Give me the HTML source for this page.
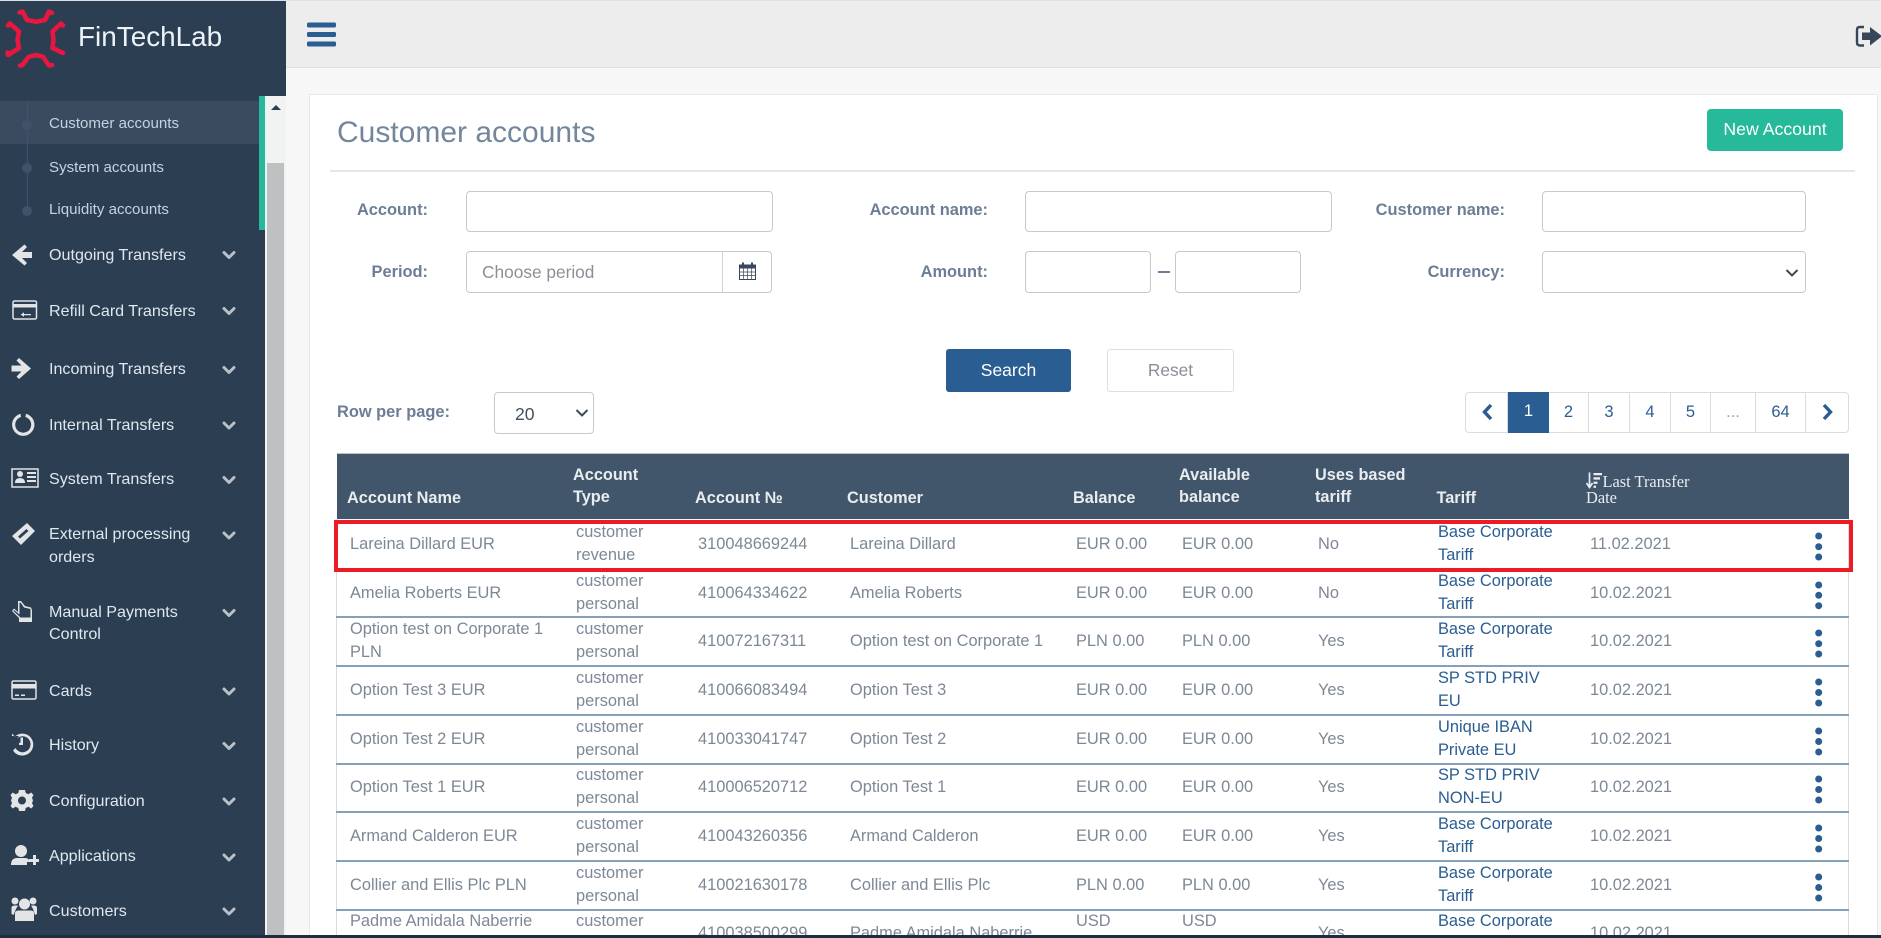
<!DOCTYPE html>
<html lang="en"><head><meta charset="utf-8"><title>Customer accounts</title>
<style>
*{box-sizing:border-box}
html,body{margin:0;padding:0;width:1881px;height:938px;overflow:hidden;background:#f7f7f7;font-family:"Liberation Sans",sans-serif}
.a{position:absolute}
#page{position:relative;width:1881px;height:938px;overflow:hidden}
.s{position:absolute;left:49px;font-size:15.1px;line-height:20px;color:#c6d2df;white-space:nowrap}
.m{position:absolute;left:49px;font-size:16.1px;line-height:22.7px;color:#dfe8f0;white-space:nowrap}
.lb{position:absolute;font-weight:bold;font-size:16.4px;line-height:20px;color:#6c7d95;text-align:right;white-space:nowrap}
.in{position:absolute;background:#fff;border:1px solid #c9c9cc;border-radius:4px}
.hd{position:absolute;font-weight:bold;font-size:16.3px;line-height:22.7px;color:#e9edf0;white-space:nowrap}
.r{position:absolute;left:0;width:0;height:0}
.r div{position:absolute;font-size:16.4px;line-height:23px;color:#7d8896;white-space:nowrap;top:-11.2px}
.r .d{top:-22.9px}
.r .t{color:#2a5d92}
.sep{position:absolute;left:336px;width:1513px;height:2px;background:#86a0b8}
.pg{position:absolute;top:392px;height:41px;border:1px solid #d9dde1;border-left:none;font-size:16.5px;line-height:39px;text-align:center;color:#2a5d92;background:#fff}
</style></head><body><div id="page">

<div class="a" style="left:0;top:0;width:1881px;height:1px;background:#dde2e8"></div>
<div class="a" style="left:286px;top:1px;width:1595px;height:67px;background:#ededed;border-bottom:1px solid #dcdfe4"></div>
<div class="a" style="left:0;top:1px;width:286px;height:95px;background:#2b3e52"></div>
<div class="a" style="left:0;top:96px;width:265px;height:842px;background:#2b3e52"></div>

<svg class="a" style="left:0;top:0" width="72" height="72" fill="none" stroke="#e8173f" stroke-width="4.6" stroke-linecap="round" stroke-linejoin="round">
<path d="M19.5 12.5L22.5 11.5L27 20L36 21.8L45 20L49 11.5L52 13"/>
<path d="M8 25.5L10 23.5L19 31.5L17.5 40L19 48L8 55L7.5 52.5"/>
<path d="M63 25.5L61 23.5L52.5 31.5L53.5 40L52.5 48L63 53"/>
<path d="M20 65.5L22.5 65L28.5 56.8L36 55L43 56.8L49 65.5L52 65"/>
</svg>
<div class="a" style="left:78px;top:20px;font-size:27.9px;line-height:34px;color:#eef3f8;white-space:nowrap">FinTechLab</div>

<!-- hamburger -->
<svg class="a" style="left:307px;top:22px" width="30" height="25" fill="#2a5d92"><rect y="0.5" width="29" height="5" rx="1.5"/><rect y="10" width="29" height="5" rx="1.5"/><rect y="19.5" width="29" height="5" rx="1.5"/></svg>
<!-- logout -->
<svg class="a" style="left:1855px;top:25px" width="26" height="23"><path d="M9 2H5Q2 2 2 5V17.500Q2 20.500 5 20.500H9" fill="none" stroke="#36475a" stroke-width="2.400"/><path d="M7 7.500H15V2L27 11.200L15 20.500V15H7Z" fill="#36475a"/></svg>

<!-- sidebar sub -->
<div class="a" style="left:0;top:101px;width:259px;height:43px;background:#3a4b60"></div>
<div class="a" style="left:27px;top:101px;width:1px;height:110px;background:#3f5268"></div>
<div class="a" style="left:22px;top:120px;width:10px;height:10px;border-radius:50%;background:#3f5268"></div>
<div class="a" style="left:22px;top:163px;width:10px;height:10px;border-radius:50%;background:#3f5268"></div>
<div class="a" style="left:22px;top:206px;width:10px;height:10px;border-radius:50%;background:#3f5268"></div>
<div class="s" style="top:114px">Customer accounts</div>
<div class="s" style="top:158px">System accounts</div>
<div class="s" style="top:200px">Liquidity accounts</div>
<div class="a" style="left:259px;top:96px;width:6px;height:134px;background:#26b99a"></div>

<!-- scrollbar -->
<div class="a" style="left:265px;top:96px;width:21px;height:839px;background:#f1f2f2"></div>
<div class="a" style="left:267px;top:163px;width:17px;height:772px;background:#bfc0c1"></div>
<div class="a" style="left:271px;top:105px;width:0;height:0;border-left:5px solid transparent;border-right:5px solid transparent;border-bottom:5px solid #2b3e52"></div>

<!-- main menu text -->
<div class="m" style="top:244px">Outgoing Transfers</div>
<div class="m" style="top:300px">Refill Card Transfers</div>
<div class="m" style="top:357.500px">Incoming Transfers</div>
<div class="m" style="top:413.500px">Internal Transfers</div>
<div class="m" style="top:467.500px">System Transfers</div>
<div class="m" style="top:523.300px;width:170px;white-space:normal;line-height:23px">External processing orders</div>
<div class="m" style="top:600.500px;width:170px;white-space:normal">Manual Payments Control</div>
<div class="m" style="top:679.500px">Cards</div>
<div class="m" style="top:733.500px">History</div>
<div class="m" style="top:789.500px">Configuration</div>
<div class="m" style="top:844.500px">Applications</div>
<div class="m" style="top:899.500px">Customers</div>

<!-- chevrons + icons -->
<svg class="a" style="left:0;top:0" width="265" height="938">
<g fill="none" stroke="#b9c0c7" stroke-width="3" stroke-linecap="round" stroke-linejoin="round">
<path d="M224 252.500L229 257.500L234 252.500"/><path d="M224 308.500L229 313.500L234 308.500"/><path d="M224 367.500L229 372.500L234 367.500"/><path d="M224 423L229 428L234 423"/><path d="M224 477.500L229 482.500L234 477.500"/><path d="M224 533L229 538L234 533"/><path d="M224 610.500L229 615.500L234 610.500"/><path d="M224 689L229 694L234 689"/><path d="M224 743.500L229 748.500L234 743.500"/><path d="M224 799L229 804L234 799"/><path d="M224 855L229 860L234 855"/><path d="M224 909L229 914L234 909"/>
</g>
<g fill="#e3e4e6">
<path d="M24.500 244.500L27 247L22 252H32V258H22L27 263L24.500 265.500L12 255Z"/>
<rect x="13" y="301" width="23.500" height="18" rx="1.500" fill="none" stroke="#e3e4e6" stroke-width="1.500"/><rect x="13" y="304" width="23.500" height="3.500"/>
<path d="M21 314H31V315.200H21ZM21 314.600L24 312.300V316.900Z"/>
<path d="M19 358L16.500 360.500L21.500 365.500H11.500V371.500H21.500L16.500 376.500L19 379L31 368.500Z"/>
<path d="M20.500 413.800A11.200 11.200 0 1 0 26 413.800L25.400 417A8 8 0 1 1 21 417Z"/>
<rect x="12" y="469" width="26" height="18" fill="none" stroke="#e3e4e6" stroke-width="1.500"/><circle cx="20" cy="474" r="3"/><path d="M15 483Q15 478 20 478Q25 478 25 483ZM27 472H36V474H27ZM27 476H36V478H27ZM27 480H36V482H27Z"/>
<path d="M12 536L27 523L35 531L21 545ZM20 538.500L28.500 531L26.500 529L18 536.500Z" fill-rule="evenodd"/>
<path fill-rule="evenodd" d="M18 601L21 601L25 606L31 607.500L32 610V622H19V618L12 611L14 608.500L18 612ZM20.500 602.500L19.500 603V614.500L14 610L13.500 611L20.500 617.500H30.500V609L24 607.500Z"/>
<rect x="12" y="681" width="24" height="18" rx="1.500" fill="none" stroke="#e3e4e6" stroke-width="1.500"/><rect x="12" y="684" width="24" height="4.500"/><rect x="15" y="694.500" width="4" height="1.500"/><rect x="21" y="694.500" width="4" height="1.500"/>
<path d="M12 736L19 736L17 738.500A8 8 0 1 1 15.500 748L13 750.500A11 11 0 1 0 14.800 736.500L12 733.500Z"/><path d="M20.500 737.500H23V745H19V742.800H20.500Z"/>
<path fill-rule="evenodd" d="M19 790H25L25.700 793L28.500 794.200L31.200 792.500L33.500 795L32 797.800L33 800.500L32 803.200L33.500 806L31.200 808.500L28.500 806.800L25.700 808L25 811H19L18.300 808L15.500 806.800L12.800 808.500L10.500 806L12 803.200L11 800.500L12 797.800L10.500 795L12.800 792.500L15.500 794.200L18.300 793ZM22 796.500A4 4 0 1 0 22 804.500A4 4 0 1 0 22 796.500Z"/>
<circle cx="21" cy="851" r="6"/><path d="M11 865Q11 858 17 858H25Q28 858 29 860V862H27V865Z"/><rect x="33" y="855" width="3" height="10"/><rect x="29" y="859" width="10" height="3"/>
<circle cx="24.500" cy="904" r="5.500"/><circle cx="15" cy="901" r="3.500"/><circle cx="33" cy="901" r="3.500"/><path d="M15 921V913Q15 910.500 19 910.500H30Q34 910.500 34 913V921Z"/><path d="M11.500 914V908Q11.500 905.500 15 905.500H18L16 909L13.500 915ZM37 914V908Q37 905.500 33.500 905.500H31L33 909L35 915Z"/>
</g>
</svg>

<!-- card -->
<div class="a" style="left:309px;top:94px;width:1569px;height:850px;background:#fff;border:1px solid #e6e9ed"></div>
<div class="a" style="left:337px;top:115px;font-size:30px;line-height:36px;color:#73869c;white-space:nowrap">Customer accounts</div>
<div class="a" style="left:330px;top:170px;width:1525px;height:2px;background:#e7e7eb"></div>
<div class="a" style="left:1707px;top:109px;width:136px;height:42px;background:#26b99a;border-radius:4px;color:#fff;font-size:17.700px;line-height:41px;text-align:center">New Account</div>

<!-- filters -->
<div class="lb" style="left:300px;width:128px;top:200px">Account:</div>
<div class="in" style="left:466px;top:191px;width:307px;height:41px"></div>
<div class="lb" style="left:840px;width:148px;top:200px">Account name:</div>
<div class="in" style="left:1025px;top:191px;width:307px;height:41px"></div>
<div class="lb" style="left:1340px;width:165px;top:200px">Customer name:</div>
<div class="in" style="left:1542px;top:191px;width:264px;height:41px"></div>

<div class="lb" style="left:300px;width:128px;top:262px">Period:</div>
<div class="in" style="left:466px;top:251px;width:306px;height:42px"></div>
<div class="a" style="left:722px;top:252px;width:1px;height:40px;background:#d5d5d8"></div>
<div class="a" style="left:482px;top:261px;font-size:17.300px;line-height:22px;color:#8b9097;white-space:nowrap">Choose period</div>
<svg class="a" style="left:739px;top:262px" width="17" height="18" fill="none" stroke="#37485a"><rect x="0.500" y="3" width="16" height="14.500"/><rect x="0" y="2.500" width="17" height="4" fill="#37485a" stroke="none"/><path d="M4 0.500V4M13 0.500V4" stroke-width="2"/><path d="M0 10H17M0 13.500H17M4.500 6V17M8.500 6V17M12.500 6V17" stroke-width="0.700"/></svg>

<div class="lb" style="left:840px;width:148px;top:262px">Amount:</div>
<div class="in" style="left:1025px;top:251px;width:126px;height:42px"></div>
<div class="a" style="left:1158px;top:271px;width:12px;height:1.500px;background:#6c7d95"></div>
<div class="in" style="left:1175px;top:251px;width:126px;height:42px"></div>
<div class="lb" style="left:1340px;width:165px;top:262px">Currency:</div>
<div class="in" style="left:1542px;top:251px;width:264px;height:42px"></div>
<svg class="a" style="left:1785px;top:268px" width="14" height="10" fill="none" stroke="#3c4a5e" stroke-width="2"><path d="M1.500 2L7 7.500L12.500 2"/></svg>

<div class="a" style="left:946px;top:349px;width:125px;height:43px;background:#2a5d92;border-radius:3px;color:#fff;font-size:17.500px;line-height:42px;text-align:center">Search</div>
<div class="a" style="left:1107px;top:349px;width:127px;height:43px;background:#fff;border:1px solid #dcdfe3;border-radius:3px;color:#8a8f97;font-size:17.300px;line-height:41px;text-align:center">Reset</div>

<div class="lb" style="left:337px;top:401.500px;text-align:left">Row per page:</div>
<div class="in" style="left:494px;top:392px;width:100px;height:42px"></div>
<div class="a" style="left:515px;top:402.500px;font-size:17.600px;line-height:22px;color:#44505f">20</div>
<svg class="a" style="left:575px;top:408px" width="14" height="10" fill="none" stroke="#3c4a5e" stroke-width="2"><path d="M1.500 2L7 7.500L12.500 2"/></svg>

<!-- pagination -->
<div class="pg" style="left:1465px;width:43px;border-left:1px solid #d9dde1;border-radius:4px 0 0 4px"></div>
<svg class="a" style="left:1481px;top:403px" width="14" height="18" fill="none" stroke="#2a5d92" stroke-width="3.400"><path d="M10 2L3.500 9L10 16"/></svg>
<div class="pg" style="left:1508px;width:41px;background:#2a5d92;color:#fff;border:none">1</div>
<div class="pg" style="left:1549px;width:40px">2</div>
<div class="pg" style="left:1589px;width:41px">3</div>
<div class="pg" style="left:1630px;width:41px">4</div>
<div class="pg" style="left:1671px;width:40px">5</div>
<div class="pg" style="left:1711px;width:45px;color:#9aa2aa">...</div>
<div class="pg" style="left:1756px;width:50px">64</div>
<div class="pg" style="left:1806px;width:43px;border-radius:0 4px 4px 0"></div>
<svg class="a" style="left:1819.500px;top:403px" width="14" height="18" fill="none" stroke="#2a5d92" stroke-width="3.400"><path d="M4 2L10.500 9L4 16"/></svg>

<!-- table head -->
<div class="a" style="left:336.500px;top:453px;width:1512px;height:66px;background:#41566b;border-top:1px solid #b9c2cb"></div>
<div class="hd" style="left:347px;top:486.500px">Account Name</div>
<div class="hd" style="left:573px;top:463.500px">Account<br>Type</div>
<div class="hd" style="left:695px;top:486.500px">Account №</div>
<div class="hd" style="left:847px;top:486.500px">Customer</div>
<div class="hd" style="left:1073px;top:486.500px">Balance</div>
<div class="hd" style="left:1179px;top:463.500px">Available<br>balance</div>
<div class="hd" style="left:1315px;top:463.500px">Uses based<br>tariff</div>
<div class="hd" style="left:1436.500px;top:486.500px">Tariff</div>
<svg class="a" style="left:1586px;top:472px" width="17" height="18"><path d="M3.500 0.500V15M0.500 11L3.500 15.500L6.500 11" fill="none" stroke="#e9edf0" stroke-width="1.700"/><path d="M7.500 1H16V3.300H7.500ZM7.500 5.300H14V7.600H7.500ZM7.500 9.600H11.500V11.900H7.500ZM7.500 13.600H10V15.900H7.500Z" fill="#e9edf0"/></svg>
<div class="a" style="left:1586px;top:473.500px;width:130px;font-family:'Liberation Serif',serif;font-size:16.400px;line-height:16px;color:#e9edf0;text-indent:16.500px">Last Transfer Date</div>

<!-- rows -->
<div class="a" style="left:336px;top:519px;width:1px;height:416px;background:#d9dde1"></div>
<div class="a" style="left:1848px;top:519px;width:1px;height:416px;background:#d9dde1"></div>
<div class="sep" style="top:568px;background:#c5cfd9"></div>
<div class="sep" style="top:616px"></div>
<div class="sep" style="top:665px"></div>
<div class="sep" style="top:713.500px"></div>
<div class="sep" style="top:762.500px"></div>
<div class="sep" style="top:811px"></div>
<div class="sep" style="top:860px"></div>
<div class="sep" style="top:908.500px"></div>

<div class="r" style="top:544px"><div style="left:350px">Lareina Dillard EUR</div><div class="d" style="left:576px">customer<br>revenue</div><div style="left:698px">310048669244</div><div style="left:850px">Lareina Dillard</div><div style="left:1076px">EUR 0.00</div><div style="left:1182px">EUR 0.00</div><div style="left:1318px">No</div><div class="d t" style="left:1438px">Base Corporate<br>Tariff</div><div style="left:1590px">11.02.2021</div></div>
<div class="r" style="top:593px"><div style="left:350px">Amelia Roberts EUR</div><div class="d" style="left:576px">customer<br>personal</div><div style="left:698px">410064334622</div><div style="left:850px">Amelia Roberts</div><div style="left:1076px">EUR 0.00</div><div style="left:1182px">EUR 0.00</div><div style="left:1318px">No</div><div class="d t" style="left:1438px">Base Corporate<br>Tariff</div><div style="left:1590px">10.02.2021</div></div>
<div class="r" style="top:641px"><div class="d" style="left:350px">Option test on Corporate 1<br>PLN</div><div class="d" style="left:576px">customer<br>personal</div><div style="left:698px">410072167311</div><div style="left:850px">Option test on Corporate 1</div><div style="left:1076px">PLN 0.00</div><div style="left:1182px">PLN 0.00</div><div style="left:1318px">Yes</div><div class="d t" style="left:1438px">Base Corporate<br>Tariff</div><div style="left:1590px">10.02.2021</div></div>
<div class="r" style="top:690px"><div style="left:350px">Option Test 3 EUR</div><div class="d" style="left:576px">customer<br>personal</div><div style="left:698px">410066083494</div><div style="left:850px">Option Test 3</div><div style="left:1076px">EUR 0.00</div><div style="left:1182px">EUR 0.00</div><div style="left:1318px">Yes</div><div class="d t" style="left:1438px">SP STD PRIV<br>EU</div><div style="left:1590px">10.02.2021</div></div>
<div class="r" style="top:739px"><div style="left:350px">Option Test 2 EUR</div><div class="d" style="left:576px">customer<br>personal</div><div style="left:698px">410033041747</div><div style="left:850px">Option Test 2</div><div style="left:1076px">EUR 0.00</div><div style="left:1182px">EUR 0.00</div><div style="left:1318px">Yes</div><div class="d t" style="left:1438px">Unique IBAN<br>Private EU</div><div style="left:1590px">10.02.2021</div></div>
<div class="r" style="top:787px"><div style="left:350px">Option Test 1 EUR</div><div class="d" style="left:576px">customer<br>personal</div><div style="left:698px">410006520712</div><div style="left:850px">Option Test 1</div><div style="left:1076px">EUR 0.00</div><div style="left:1182px">EUR 0.00</div><div style="left:1318px">Yes</div><div class="d t" style="left:1438px">SP STD PRIV<br>NON-EU</div><div style="left:1590px">10.02.2021</div></div>
<div class="r" style="top:836px"><div style="left:350px">Armand Calderon EUR</div><div class="d" style="left:576px">customer<br>personal</div><div style="left:698px">410043260356</div><div style="left:850px">Armand Calderon</div><div style="left:1076px">EUR 0.00</div><div style="left:1182px">EUR 0.00</div><div style="left:1318px">Yes</div><div class="d t" style="left:1438px">Base Corporate<br>Tariff</div><div style="left:1590px">10.02.2021</div></div>
<div class="r" style="top:885px"><div style="left:350px">Collier and Ellis Plc PLN</div><div class="d" style="left:576px">customer<br>personal</div><div style="left:698px">410021630178</div><div style="left:850px">Collier and Ellis Plc</div><div style="left:1076px">PLN 0.00</div><div style="left:1182px">PLN 0.00</div><div style="left:1318px">Yes</div><div class="d t" style="left:1438px">Base Corporate<br>Tariff</div><div style="left:1590px">10.02.2021</div></div>
<div class="r" style="top:933px"><div class="d" style="left:350px">Padme Amidala Naberrie<br>USD</div><div class="d" style="left:576px">customer<br>personal</div><div style="left:698px">410038500299</div><div style="left:850px">Padme Amidala Naberrie</div><div class="d" style="left:1076px">USD<br>0.00</div><div class="d" style="left:1182px">USD<br>0.00</div><div style="left:1318px">Yes</div><div class="d t" style="left:1438px">Base Corporate<br>Tariff</div><div style="left:1590px">10.02.2021</div></div>

<!-- kebabs -->
<svg class="a" style="left:1810px;top:525px" width="18" height="413" fill="#2a5d92">
<circle cx="8.700" cy="11" r="3.500"/><circle cx="8.700" cy="21.700" r="3.500"/><circle cx="8.700" cy="32" r="3.500"/>
<circle cx="8.700" cy="60" r="3.500"/><circle cx="8.700" cy="70.300" r="3.500"/><circle cx="8.700" cy="80.700" r="3.500"/>
<circle cx="8.700" cy="108" r="3.500"/><circle cx="8.700" cy="118.700" r="3.500"/><circle cx="8.700" cy="129" r="3.500"/>
<circle cx="8.700" cy="157" r="3.500"/><circle cx="8.700" cy="167.500" r="3.500"/><circle cx="8.700" cy="178" r="3.500"/>
<circle cx="8.700" cy="206" r="3.500"/><circle cx="8.700" cy="216.500" r="3.500"/><circle cx="8.700" cy="227" r="3.500"/>
<circle cx="8.700" cy="254" r="3.500"/><circle cx="8.700" cy="264.500" r="3.500"/><circle cx="8.700" cy="275" r="3.500"/>
<circle cx="8.700" cy="303" r="3.500"/><circle cx="8.700" cy="313.500" r="3.500"/><circle cx="8.700" cy="324" r="3.500"/>
<circle cx="8.700" cy="352" r="3.500"/><circle cx="8.700" cy="362.500" r="3.500"/><circle cx="8.700" cy="373" r="3.500"/>
</svg>

<!-- red highlight -->
<div class="a" style="left:334px;top:520px;width:1519px;height:52px;border:4.500px solid #ed1c24"></div>

<!-- bottom strip -->
<div class="a" style="left:0;top:935px;width:1881px;height:3px;background:#1e2e3c"></div>
</div></body></html>
